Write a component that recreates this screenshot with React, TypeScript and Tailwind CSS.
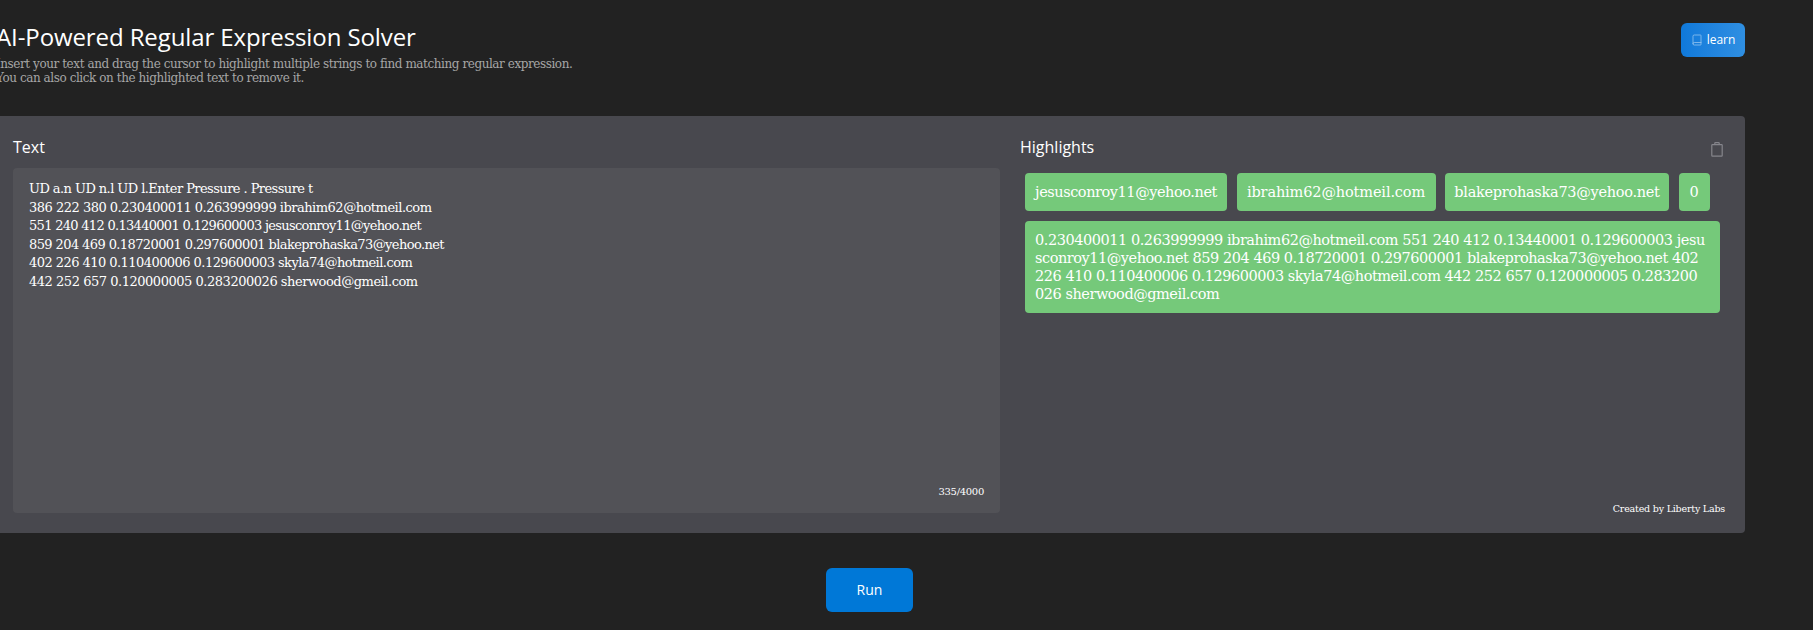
import { Book } from 'lucide-react';

const textLines = [
  { text: 'UD a.n UD n.l UD l.Enter Pressure . Pressure t', tracking: 'tracking-[-0.56px]' },
  { text: '386 222 380 0.230400011 0.263999999 ibrahim62@hotmeil.com', tracking: 'tracking-[-0.5px]' },
  { text: '551 240 412 0.13440001 0.129600003 jesusconroy11@yehoo.net', tracking: 'tracking-[-0.7px]' },
  { text: '859 204 469 0.18720001 0.297600001 blakeprohaska73@yehoo.net', tracking: 'tracking-[-0.6px]' },
  { text: '402 226 410 0.110400006 0.129600003 skyla74@hotmeil.com', tracking: 'tracking-[-0.55px]' },
  { text: '442 252 657 0.120000005 0.283200026 sherwood@gmeil.com', tracking: 'tracking-[-0.47px]' },
];

const chips = [
  { text: 'jesusconroy11@yehoo.net', cls: 'w-[202px] tracking-[-0.44px]' },
  { text: 'ibrahim62@hotmeil.com', cls: 'w-[199px] tracking-[-0.13px]' },
  { text: 'blakeprohaska73@yehoo.net', cls: 'w-[224px] tracking-[-0.28px]' },
  { text: '0', cls: 'w-[31px]' },
];

const longChip =
  '0.230400011 0.263999999 ibrahim62@hotmeil.com 551 240 412 0.13440001 0.129600003 jesusconroy11@yehoo.net 859 204 469 0.18720001 0.297600001 blakeprohaska73@yehoo.net 402 226 410 0.110400006 0.129600003 skyla74@hotmeil.com 442 252 657 0.120000005 0.283200026 sherwood@gmeil.com';

const sans = "font-['Open_Sans',sans-serif]";
const serif = "font-['DejaVu_Serif',serif]";

export default function App() {
  return (
    <div className="h-[630px] w-[1813px] overflow-hidden bg-[#222222] text-white">
      <div className="-ml-[18px] w-[1763px]">
        <header className="flex h-[116px] items-start justify-between pl-[14px]">
          <div className="pt-[21px]">
            <h1 className={`${sans} text-2xl leading-8 tracking-[-0.1px]`}>AI-Powered Regular Expression Solver</h1>
            <p className={`${serif} mt-[4px] text-xs leading-[14px] tracking-[-0.43px] text-[#a6a6a6]`}>
              Insert your text and drag the cursor to highlight multiple strings to find matching regular expression.
              <br />
              You can also click on the highlighted text to remove it.
            </p>
          </div>
          <button className={`${sans} mt-[23px] flex h-[34px] w-16 items-center justify-center gap-1 rounded-md bg-gradient-to-r from-[#0f79da] to-[#2f8fe2] text-xs`}>
            <Book size={12} strokeWidth={1.5} className="text-[#9cc8f0]" />
            learn
          </button>
        </header>

        <section className="flex h-[417px] rounded-r-sm bg-[#48484e] pl-[31px]">
          <div className="flex w-[987px] flex-col pt-[19px] pb-5">
            <h2 className={`${sans} text-base leading-6`}>Text</h2>
            <div className={`${serif} mt-[9px] flex flex-1 flex-col justify-between rounded-sm bg-[#525257] pt-[12px] pr-4 pb-[14px] pl-4 text-[13px] leading-[18.5px]`}>
              <div>
                {textLines.map((line) => (
                  <div key={line.text} className={line.tracking}>
                    {line.text}
                  </div>
                ))}
              </div>
              <div className="text-right text-[10px] leading-[14px] tracking-[-0.3px]">335/4000</div>
            </div>
          </div>

          <div className="ml-5 flex w-[705px] flex-col pt-[19px] pb-[18px]">
            <div className="flex items-center justify-between pr-[2px]">
              <h2 className={`${sans} text-base leading-6`}>Highlights</h2>
              <svg width="12" height="15" viewBox="0 0 12 15" fill="none" stroke="#85858b" strokeWidth="1.2" className="mt-[5px]">
                <rect x="0.8" y="2.6" width="10.4" height="11.6" rx="0.6" />
                <path d="M3.8 2.6V1.2a.6.6 0 0 1 .6-.6h3.2a.6.6 0 0 1 .6.6v1.4" />
              </svg>
            </div>
            <div className={`${serif} mt-[14px] flex flex-1 flex-col pl-[5px] text-[14.5px] leading-[18px]`}>
              <div className="flex gap-[9.5px]">
                {chips.map((chip) => (
                  <span key={chip.text} className={`flex h-[38px] items-center justify-center rounded bg-[#75c97a] ${chip.cls}`}>
                    {chip.text}
                  </span>
                ))}
              </div>
              <div className="mt-[10px] w-[695px] rounded bg-[#75c97a] py-[10px] pr-[14px] pl-[10px] tracking-[-0.46px] break-all">{longChip}</div>
              <div className="mt-auto text-right text-[9.5px] leading-[12px] tracking-[-0.2px]">Created by Liberty Labs</div>
            </div>
          </div>
        </section>

        <div className="mt-[35px] flex pl-[844px]">
          <button className={`${sans} h-11 w-[87px] rounded-md bg-[#0078d7] text-sm`}>Run</button>
        </div>
      </div>
    </div>
  );
}
